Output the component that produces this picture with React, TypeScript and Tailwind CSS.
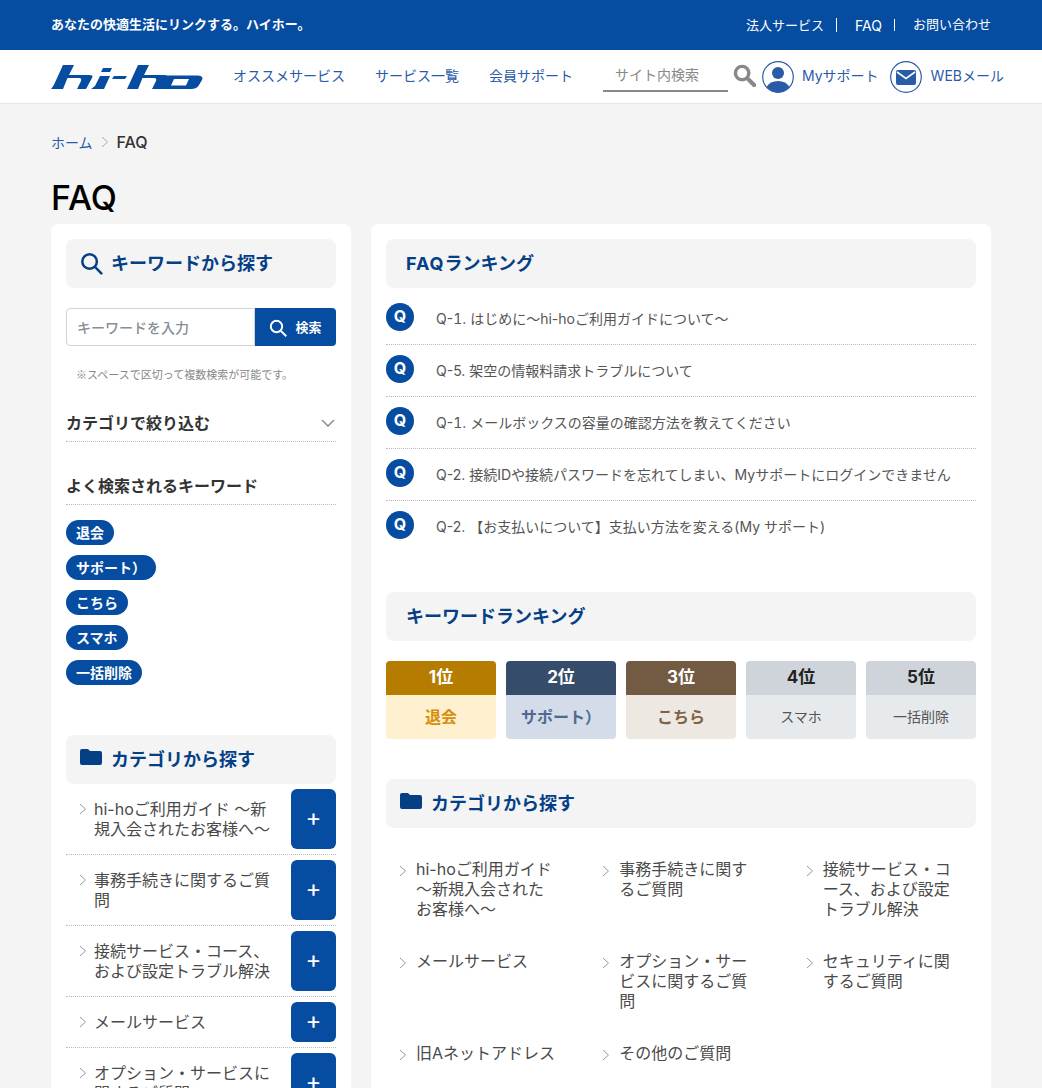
import React from 'react'

const font = {fontFamily: 'Inter, "Noto Sans CJK JP", sans-serif'}

function SearchIcon({className}: { className: string }) {
    return (
        <svg viewBox="0 0 24 24" fill="none" stroke="currentColor" strokeWidth="2.6" className={className}>
            <circle cx="10" cy="10" r="7.6"/>
            <path d="M15.6 15.6 L23 23"/>
        </svg>
    )
}

function FolderIcon() {
    return (
        <svg viewBox="0 0 22 16" className="w-[22px] h-[16px] fill-[#053f85] mb-[5px]">
            <path d="M0 2 Q0 0 2 0 H8 L10 2 H20 Q22 2 22 4 V14 Q22 16 20 16 H2 Q0 16 0 14 Z"/>
        </svg>
    )
}

function Chevron({className = "w-[8px] h-[12px] text-[#999]"}: { className?: string }) {
    return (
        <svg viewBox="0 0 8 12" fill="none" stroke="currentColor" strokeWidth="1" className={className}>
            <path d="M1 1 L6.5 6 L1 11"/>
        </svg>
    )
}

const LOGO_H = "M1 24 L12 0 H23 L18 10 H38 Q43 10 41 13 L35 24 H26 L30 16 Q31 13 28 13 H16.5 L12 24 Z"

function Logo() {
    return (
        <svg viewBox="0 0 152 24" className="w-[152px] h-[24px] fill-[#064ca0]">
            <path d="M0 24 L4 19 L8 15 L6 24 Z"/>
            <path d={LOGO_H}/>
            <path d="M40 24 L44 21 L49 11 H59 L53 24 Z"/>
            <path d="M50 7 L52 3 H61 L59 7 Z"/>
            <path d="M61 14 L63 11 H76 L74 14 Z"/>
            <g transform="translate(75 0)">
                <path d={LOGO_H}/>
            </g>
            <path fillRule="evenodd" d="M117 10.5 H146 Q153 10.5 151 15 L148 20 Q146 24 140 24 H110 Q105 24 107 20 L110 15 Q112 10.5 117 10.5 Z M123 14 L120 20.5 H135 L138 14 Z"/>
        </svg>
    )
}

function SectionTitle({icon, gap = "gap-[8px]", children}: { icon?: React.ReactNode, gap?: string, children: React.ReactNode }) {
    return (
        <div className={`h-[49px] bg-[#f4f4f4] rounded-lg flex items-center pl-[14px] ${gap}`}>
            {icon}
            <h2 className="text-[18px] font-bold text-[#053f85] leading-none">{children}</h2>
        </div>
    )
}

function SideCategory({label, h}: { label: React.ReactNode, h: string }) {
    return (
        <div className="flex items-start justify-between border-b border-dotted border-[#bbb] pb-[5px] mb-[5px]">
            <div className="flex pl-[13px] pt-[10px] gap-[7px]">
                <Chevron className="w-[8px] h-[12px] text-[#999] mt-[4px] shrink-0"/>
                <p className="w-[178px] text-[16px] leading-[20px] text-[#4a4a4a]">{label}</p>
            </div>
            <button className={`${h} w-[45px] bg-[#064ca0] rounded-md text-white text-[24px] leading-none flex items-center justify-center pb-[2px]`}>+</button>
        </div>
    )
}

function FaqRow({children, last}: { children: React.ReactNode, last?: boolean }) {
    return (
        <div className={`flex h-[52px] pt-[10px] ${last ? "" : "border-b border-dotted border-[#bbb]"}`}>
            <div className="w-[28px] h-[28px] rounded-full bg-[#064ca0] text-white font-bold text-[16px] flex items-center justify-center shrink-0 pb-[2px]">Q</div>
            <p className="ml-[22px] text-[14px] leading-[20px] text-[#555] pt-[6px]">{children}</p>
        </div>
    )
}

function Rank({rank, word, head, body, color, bold}: {
    rank: string, word: string, head: string, body: string, color: string, bold?: boolean
}) {
    return (
        <div className="w-[110px] rounded overflow-hidden">
            <div className={`${head} h-[34px] flex items-center justify-center font-bold text-[17px]`}>{rank}</div>
            <div className={`${body} ${color} ${bold ? "font-bold text-[16px]" : "text-[14px] pb-[2px]"} h-[44px] flex items-center justify-center`}>{word}</div>
        </div>
    )
}

function CategoryCell({children}: { children: React.ReactNode }) {
    return (
        <div className="flex pl-[23px] gap-[9px]">
            <Chevron className="w-[8px] h-[12px] text-[#999] mt-[6px] shrink-0"/>
            <p className="w-[140px] text-[16px] leading-[20px] text-[#4a4a4a]">{children}</p>
        </div>
    )
}

export default function App() {
    return (
        <div style={font} className="h-[1088px] overflow-hidden bg-[#f4f4f4]">
            <div className="h-[50px] bg-[#064ca0] text-white flex items-center justify-between pl-[51px] pr-[51px]">
                <p className="text-[13px] font-bold">あなたの快適生活にリンクする。ハイホー。</p>
                <div className="flex items-center text-[13px]">
                    <span className="pr-[12px] mt-[2px]">法人サービス</span>
                    <span className="w-px h-[14px] bg-white"/>
                    <span className="pl-[18px] pr-[12px] text-[14px]">FAQ</span>
                    <span className="w-px h-[12px] bg-white"/>
                    <span className="pl-[18px]">お問い合わせ</span>
                </div>
            </div>

            <header className="h-[54px] bg-white border-b border-[#e5e5e5] flex items-center pl-[51px] text-[#2a5ba8] text-[14px]">
                <Logo/>
                <nav className="flex ml-[30px] gap-[30px] mb-[3px]">
                    <a>オススメサービス</a>
                    <a>サービス一覧</a>
                    <a>会員サポート</a>
                </nav>
                <div className="w-[125px] h-[34px] ml-[30px] border-b-2 border-[#888] pl-[12px] text-[#888] flex items-center mt-[-3px]">サイト内検索</div>
                <svg viewBox="0 0 24 24" fill="none" stroke="#888" className="w-[23px] h-[23px] ml-[5px] mb-[3px]">
                    <circle cx="9.5" cy="9.5" r="7" strokeWidth="3.6"/>
                    <path d="M15 15 L22 22" strokeWidth="4.4" strokeLinecap="round"/>
                </svg>
                <svg viewBox="0 0 32 32" className="w-[32px] h-[32px] ml-[6px]">
                    <circle cx="16" cy="16" r="15.3" fill="#fff" stroke="#2a5ba8" strokeWidth="1.2"/>
                    <circle cx="16" cy="12" r="6" fill="#2a5ba8"/>
                    <path d="M4.5 26 Q8 20 16 20 Q24 20 27.5 26 Q23 31.4 16 31.4 Q9 31.4 4.5 26 Z" fill="#2a5ba8"/>
                </svg>
                <span className="ml-[8px] mb-[3px]">Myサポート</span>
                <svg viewBox="0 0 32 32" className="w-[32px] h-[32px] ml-[11px]">
                    <circle cx="16" cy="16" r="15.3" fill="#fff" stroke="#2a5ba8" strokeWidth="1.2"/>
                    <rect x="6" y="9" width="20" height="15" rx="2" fill="#2a5ba8"/>
                    <path d="M7 11 L16 17.5 L25 11" fill="none" stroke="#fff" strokeWidth="1.6"/>
                </svg>
                <span className="ml-[9px] mb-[3px]">WEBメール</span>
            </header>

            <div className="px-[51px]">
                <div className="flex items-center pt-[27px] text-[14px] h-[49px]">
                    <span className="text-[#2a5ba8]">ホーム</span>
                    <Chevron className="w-[8px] h-[12px] text-[#aaa] mx-[8px]"/>
                    <span className="text-[#333] font-medium text-[16px]">FAQ</span>
                </div>
                <h1 className="text-[34px] font-medium text-black leading-[38px] mt-[26px] mb-[7px]">FAQ</h1>

                <div className="flex gap-[20px] items-start">
                    <aside className="w-[300px] bg-white rounded-lg p-[15px] shrink-0">
                        <SectionTitle icon={<SearchIcon className="w-[23px] h-[23px] text-[#053f85]"/>}>キーワードから探す</SectionTitle>
                        <div className="flex h-[38px] mt-[20px]">
                            <div className="w-[189px] border border-[#ced4da] rounded-l bg-white text-[#868e96] text-[14px] font-medium flex items-center pl-[10px]">キーワードを入力</div>
                            <button className="flex-1 bg-[#064ca0] rounded-r text-white flex items-center justify-center gap-[8px] text-[13px] font-bold pt-[1px]">
                                <SearchIcon className="w-[18px] h-[18px]"/>
                                検索
                            </button>
                        </div>
                        <p className="text-[11px] text-[#888] pl-[10px] mt-[20px] leading-[16px] font-['Noto_Sans_CJK_JP']">※スペースで区切って複数検索が可能です。</p>
                        <div className="flex items-center justify-between mt-[24px] h-[36px] border-b border-dotted border-[#bbb] pb-[2px] font-bold text-[16px] text-[#333]">
                            カテゴリで絞り込む
                            <svg viewBox="0 0 14 8" fill="none" stroke="#8a9299" strokeWidth="1.6" className="w-[14px] h-[8px] mr-[1px]">
                                <path d="M1 1 L7 7 L13 1"/>
                            </svg>
                        </div>
                        <div className="mt-[25px] h-[38px] flex items-center border-b border-dotted border-[#bbb] font-bold text-[16px] text-[#333]">よく検索されるキーワード</div>
                        <div className="flex flex-col items-start gap-[10px] mt-[15px]">
                            {["退会", "サポート）", "こちら", "スマホ", "一括削除"].map((k) =>
                                <span key={k} className="h-[25px] px-[10px] rounded-full bg-[#064ca0] text-white text-[14px] font-bold flex items-center">{k}</span>)}
                        </div>
                        <div className="mt-[50px]">
                            <SectionTitle gap="gap-[9px]" icon={<FolderIcon/>}>カテゴリから探す</SectionTitle>
                        </div>
                        <div className="mt-[5px]">
                            <SideCategory h="h-[60px]" label="hi-hoご利用ガイド ～新規入会されたお客様へ～"/>
                            <SideCategory h="h-[60px]" label="事務手続きに関するご質問"/>
                            <SideCategory h="h-[60px]" label="接続サービス・コース、および設定トラブル解決"/>
                            <SideCategory h="h-[40px]" label="メールサービス"/>
                            <SideCategory h="h-[60px]" label="オプション・サービスに関するご質問"/>
                        </div>
                    </aside>

                    <main className="flex-1 bg-white rounded-lg pt-[15px] px-[15px] pb-[40px]">
                        <SectionTitle><span className="pl-[6px]"><span className="tracking-[1px]">FAQ</span>ランキング</span></SectionTitle>
                        <div className="mt-[5px]">
                            <FaqRow>Q-<span className="tabular-nums">1</span>. はじめに～hi-hoご利用ガイドについて～</FaqRow>
                            <FaqRow>Q-5. 架空の情報料請求トラブルについて</FaqRow>
                            <FaqRow>Q-<span className="tabular-nums">1</span>. メールボックスの容量の確認方法を教えてください</FaqRow>
                            <FaqRow>Q-2. 接続IDや接続パスワードを忘れてしまい、Myサポートにログインできません</FaqRow>
                            <FaqRow last>Q-2. 【お支払いについて】支払い方法を変える(My サポート)</FaqRow>
                        </div>
                        <div className="mt-[39px]">
                            <SectionTitle><span className="pl-[6px]">キーワードランキング</span></SectionTitle>
                        </div>
                        <div className="flex justify-between mt-[20px]">
                            <Rank rank="1位" word="退会" head="bg-[#b67c00] text-white" body="bg-[#fff0d0]" color="text-[#d58f0b]" bold/>
                            <Rank rank="2位" word="サポート）" head="bg-[#364c6b] text-white" body="bg-[#d3dce8]" color="text-[#4f6a8f]" bold/>
                            <Rank rank="3位" word="こちら" head="bg-[#725a43] text-white" body="bg-[#eee8e2]" color="text-[#7f6347]" bold/>
                            <Rank rank="4位" word="スマホ" head="bg-[#ced4da] text-[#222]" body="bg-[#e7eaed]" color="text-[#555]"/>
                            <Rank rank="5位" word="一括削除" head="bg-[#ced4da] text-[#222]" body="bg-[#e7eaed]" color="text-[#555]"/>
                        </div>
                        <div className="mt-[40px]">
                            <SectionTitle gap="gap-[9px]" icon={<FolderIcon/>}>カテゴリから探す</SectionTitle>
                        </div>
                        <div className="grid grid-cols-3 gap-y-[32px] mt-[31px] mx-[-10px]">
                            <CategoryCell>hi-hoご利用ガイド ～新規入会されたお客様へ～</CategoryCell>
                            <CategoryCell>事務手続きに関するご質問</CategoryCell>
                            <CategoryCell>接続サービス・コース、および設定トラブル解決</CategoryCell>
                            <CategoryCell>メールサービス</CategoryCell>
                            <CategoryCell>オプション・サービスに関するご質問</CategoryCell>
                            <CategoryCell>セキュリティに関するご質問</CategoryCell>
                            <CategoryCell>旧Aネットアドレス</CategoryCell>
                            <CategoryCell>その他のご質問</CategoryCell>
                        </div>
                    </main>
                </div>
            </div>
        </div>
    )
}
